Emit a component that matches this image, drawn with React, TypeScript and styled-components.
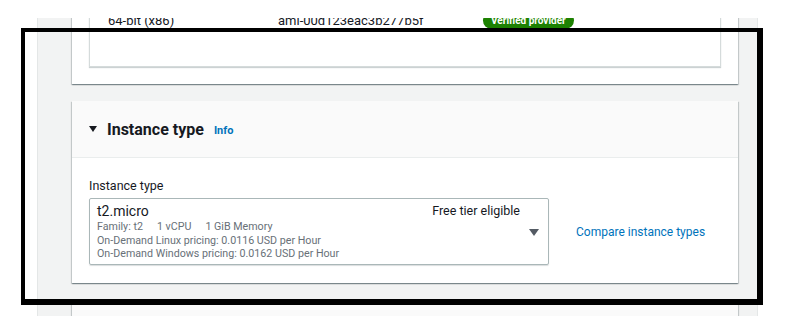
import styled, { createGlobalStyle } from "styled-components";

const GlobalStyle = createGlobalStyle`
    html, body {
        margin: 0;
        padding: 0;
        background: #ffffff;
    }
    body {
        font-family: Roboto, "Open Sans", "Liberation Sans", sans-serif;
        color: #16191f;
    }
`;

const Page = styled.div`
    position: relative;
    width: 800px;
    height: 316px;
    padding-top: 18px;
    box-sizing: border-box;
    overflow: hidden;
    background: #ffffff;
`;

const Column = styled.div`
    margin-left: 37px;
    width: 721px;
    height: 298px;
    box-sizing: border-box;
    padding: 0 19px 0 34px;
    background: #f2f3f3;
    border-left: 1px solid #e4e7e7;
    border-right: 1px solid #e4e7e7;
    overflow: hidden;
`;

const Card = styled.section<{ $offset?: number }>`
    margin-top: ${(p) => p.$offset ?? 17}px;
    background: #ffffff;
    box-shadow: 0 1px 1px 0 rgba(0, 28, 36, 0.3), 1px 1px 1px 0 rgba(0, 28, 36, 0.15),
        -1px 1px 1px 0 rgba(0, 28, 36, 0.15);
`;

const PrevBody = styled.div`
    padding: 0 17px 17px;
`;

const AmiBox = styled.div`
    border: 1px solid #d5dbdb;
    border-top: none;
    padding: 0 0 35px 18px;
    box-shadow: 0 1px 1px 0 rgba(0, 28, 36, 0.2);
`;

const AmiRow = styled.div`
    display: grid;
    grid-template-columns: 170px 205px auto;
    align-items: center;
    height: 22px;
    font-size: 13px;
`;

const Badge = styled.span`
    justify-self: start;
    background: #1d8102;
    color: #ffffff;
    font-size: 10px;
    font-weight: 700;
    line-height: 17px;
    padding: 0 8px;
    border-radius: 10px;
`;

const Header = styled.header`
    display: flex;
    align-items: center;
    gap: 10px;
    height: 56px;
    padding: 0 17px;
    background: #fafafa;
    border-bottom: 1px solid #eaeded;
`;

const Caret = styled.span<{ $color?: string; $size?: number }>`
    width: 0;
    height: 0;
    border-left: ${(p) => (p.$size ?? 8) / 2}px solid transparent;
    border-right: ${(p) => (p.$size ?? 8) / 2}px solid transparent;
    border-top: ${(p) => ((p.$size ?? 8) * 3) / 4}px solid ${(p) => p.$color ?? "#16191f"};
`;

const Title = styled.h2`
    margin: 0;
    font-size: 16px;
    font-weight: 700;
    color: #16191f;
`;

const InfoLink = styled.a`
    font-size: 11px;
    font-weight: 700;
    color: #0073bb;
    text-decoration: none;
    margin-top: 3px;
`;

const Body = styled.div`
    padding: 18px 17px 18px;
`;

const Label = styled.div`
    font-size: 12.5px;
    line-height: 20px;
    margin-bottom: 2px;
    color: #16191f;
`;

const FieldRow = styled.div`
    display: flex;
    align-items: center;
    gap: 27px;
`;

const Select = styled.div`
    display: grid;
    grid-template-columns: 1fr auto auto;
    width: 460px;
    height: 67px;
    box-sizing: border-box;
    padding: 3px 9px 3px 7px;
    border: 1px solid #aab7b8;
    border-radius: 2px;
    box-shadow: 0 1px 1px 0 rgba(0, 28, 36, 0.15);
`;

const Main = styled.div`
    font-size: 14px;
    line-height: 18px;
    color: #16191f;
`;

const Sub = styled.div`
    display: flex;
    gap: 14px;
    font-size: 10.7px;
    line-height: 13.5px;
    color: #687078;
`;

const FreeTier = styled.div`
    align-self: start;
    margin-right: 9px;
    font-size: 12.5px;
    line-height: 18px;
    color: #16191f;
`;

const CaretCell = styled.div`
    align-self: center;
    display: flex;
    margin-top: 2px;
`;

const Link = styled.a`
    font-size: 12px;
    white-space: nowrap;
    color: #0073bb;
    text-decoration: none;
`;

const Frame = styled.div`
    position: absolute;
    left: 21px;
    top: 28px;
    width: 742px;
    height: 277px;
    box-sizing: border-box;
    border-style: solid;
    border-color: #000000;
    border-width: 4px 6px 6px 4px;
    pointer-events: none;
`;

export default function App() {
    return (
        <>
            <GlobalStyle />
            <Page>
                <Column>
                    <Card $offset={-9}>
                        <PrevBody>
                            <AmiBox>
                                <AmiRow>
                                    <span>64-bit (x86)</span>
                                    <span>ami-00d123eac3b277b5f</span>
                                    <Badge>Verified provider</Badge>
                                </AmiRow>
                            </AmiBox>
                        </PrevBody>
                    </Card>

                    <Card>
                        <Header>
                            <Caret />
                            <Title>Instance type</Title>
                            <InfoLink href="#">Info</InfoLink>
                        </Header>
                        <Body>
                            <Label>Instance type</Label>
                            <FieldRow>
                                <Select>
                                    <div>
                                        <Main>t2.micro</Main>
                                        <Sub>
                                            <span>Family: t2</span>
                                            <span>1 vCPU</span>
                                            <span>1 GiB Memory</span>
                                        </Sub>
                                        <Sub>On-Demand Linux pricing: 0.0116 USD per Hour</Sub>
                                        <Sub>On-Demand Windows pricing: 0.0162 USD per Hour</Sub>
                                    </div>
                                    <FreeTier>Free tier eligible</FreeTier>
                                    <CaretCell>
                                        <Caret $color="#545b64" $size={10} />
                                    </CaretCell>
                                </Select>
                                <Link href="#">Compare instance types</Link>
                            </FieldRow>
                        </Body>
                    </Card>

                    <Card>
                        <Header />
                    </Card>
                </Column>
                <Frame />
            </Page>
        </>
    );
}
